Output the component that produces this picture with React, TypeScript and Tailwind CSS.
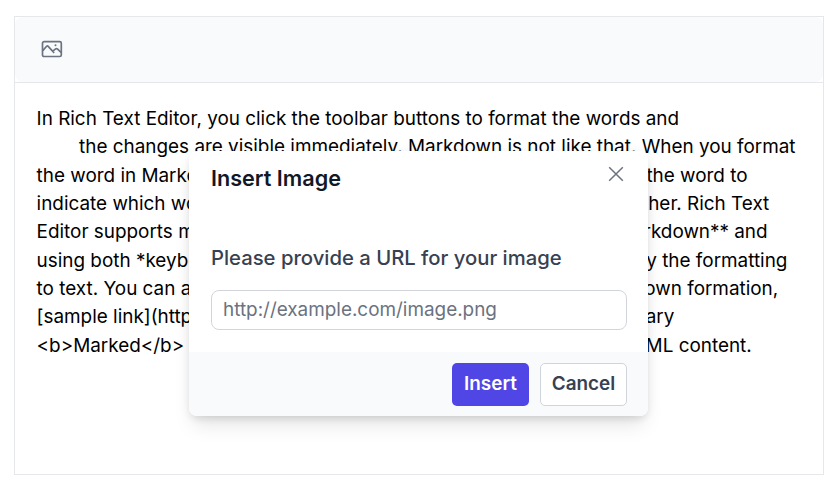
const content = [
  'In Rich Text Editor, you click the toolbar buttons to format the words and',
  '        the changes are visible immediately. Markdown is not like that. When you format',
  'the word in Markdown format, you need to add Markdown syntax to the word to',
  'indicate which words and phrases should look different from each other. Rich Text',
  'Editor supports markdown editing when the editorMode set as **markdown** and',
  'using both *keyboard interaction* and *toolbar action*, you can apply the formatting',
  'to text. You can add our own custom formation syntax for the Markdown formation,',
  '[sample link](https://ej2.syncfusion.com/home/). The third-party library',
  '<b>Marked</b> is used in this sample to convert markdown into HTML content.',
];

function Toolbar() {
  return (
    <div className="h-[66px] shrink-0 border-b border-[#e5e7eb]">
      <div className="flex h-full items-center rounded-lg bg-[#f9fafb] pb-[2px] pl-[26px]">
        <button type="button" aria-label="Insert Image" className="text-[#6b7280]">
          <svg width="22" height="18" viewBox="0 0 22 18" fill="none" stroke="currentColor" strokeWidth="1.7" className="block">
            <rect x="1.5" y="1.7" width="18.8" height="14.8" rx="1.6" />
            <path d="M1.8 10.6 5.6 6.3Q6.4 5.5 7.2 6.3L13.2 12.8M11.8 11.2 14.6 8.9Q15.5 8.2 16.4 9L20 12.4" />
            <circle cx="14.5" cy="5.2" r="1" fill="currentColor" stroke="none" />
          </svg>
        </button>
      </div>
    </div>
  );
}

function InsertImageDialog() {
  return (
    <div
      role="dialog"
      className="absolute left-[174px] top-[134px] flex h-[265px] w-[459px] flex-col overflow-hidden rounded-lg bg-white shadow-[0_13px_20px_-4px_rgba(0,0,0,0.1),0_5px_8px_-3px_rgba(0,0,0,0.1),0_0_12px_rgba(0,0,0,0.05)]"
    >
      <div className="flex h-[58px] shrink-0 items-start justify-between pl-[22px] pr-[24px]">
        <h2 className="pt-[11px] text-[21.6px] font-semibold leading-[32px] text-[#111827]">Insert Image</h2>
        <button type="button" aria-label="Close" className="pt-[15px] text-[#6b7280]">
          <svg width="16" height="16" viewBox="0 0 16 16" fill="none" stroke="currentColor" strokeWidth="1.5" className="block">
            <path d="M1.2 1.2 14.8 14.8M14.8 1.2 1.2 14.8" />
          </svg>
        </button>
      </div>
      <div className="flex grow flex-col pl-[22px] pr-[21px] pt-[35px]">
        <label className="text-[20.25px] font-medium leading-[28px] text-[#374151]">Please provide a URL for your image</label>
        <input
          className="mt-[18px] h-[40px] w-full rounded-[8px] border border-[#d1d5db] bg-white px-[11px] pb-px text-[18.9px] text-[#111827] placeholder:text-[#6b7280]"
          placeholder="http://example.com/image.png"
        />
      </div>
      <div className="flex h-[64px] shrink-0 items-start justify-end gap-[11px] bg-[#f9fafb] pr-[21px] pt-[11px] text-[18.9px] font-semibold">
        <button type="button" className="h-[43px] w-[77px] rounded-[5px] bg-[#4f46e5] text-white">Insert</button>
        <button type="button" className="h-[43px] w-[87px] rounded-[5px] border border-[#d1d5db] bg-white text-[#374151]">Cancel</button>
      </div>
    </div>
  );
}

export default function App() {
  return (
    <div className="h-[490px] w-[838px] overflow-hidden bg-white pl-[14px] pt-[16px] font-['Inter',sans-serif]">
      <div className="relative flex h-[459px] w-[810px] flex-col border border-[#e5e7eb]">
        <Toolbar />
        <div className="whitespace-pre pl-[21.6px] pt-[22px] text-[18.9px] leading-[28.35px] text-black">
          {content.join('\n')}
        </div>
        <InsertImageDialog />
      </div>
    </div>
  );
}
